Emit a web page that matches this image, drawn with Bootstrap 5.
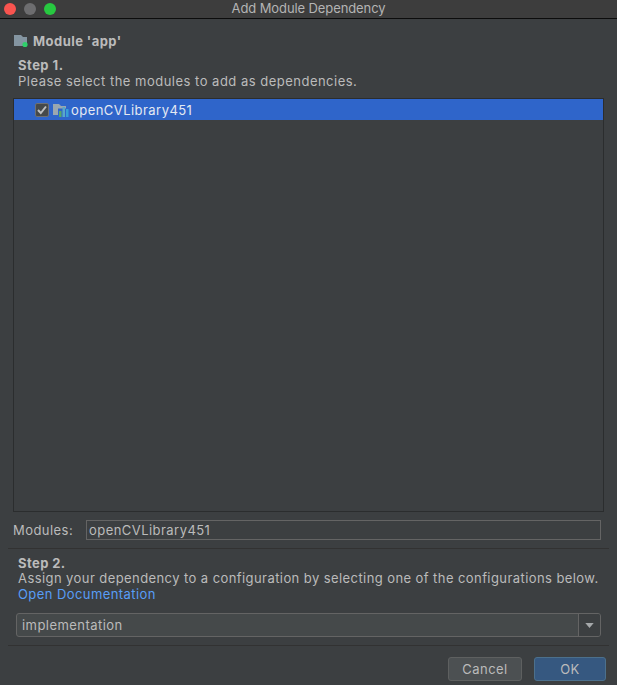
<!DOCTYPE html>
<html lang="en">
<head>
  <meta charset="UTF-8" />
  <title>Add Module Dependency</title>
  <link href="https://cdn.jsdelivr.net/npm/bootstrap@5.3.3/dist/css/bootstrap.min.css" rel="stylesheet"/>
  <style>
    html, body { height: 100%; }
    body {
      margin: 0;
      background: #3c3f41;
      color: #bbbbbb;
      font-family: "Inter", "Liberation Sans", sans-serif;
      font-size: 13px;
      line-height: 16px;
      letter-spacing: .45px;
      overflow: hidden;
    }
    .dialog { width: 617px; height: 685px; }
    .title-bar {
      height: 19px;
      background: #3d3d3d;
      border-bottom: 1px solid #0c0c0c;
      color: #b4b4b4;
      font-size: 13px;
      line-height: 17px;
      letter-spacing: -.1px;
    }
    .lights { left: 4px; top: 0; gap: 8px; padding-top: 3px; }
    .light { width: 12px; height: 12px; border-radius: 50%; }
    .light-red { background: #f9544f; }
    .light-grey { background: #6d6d6f; }
    .light-green { background: #27c840; }
    .module-head { padding: 7px 0 0 14px; height: 37px; font-weight: 700; }
    .step-text { padding: 0 0 0 18px; white-space: nowrap; }
    .step-one { height: 42px; padding-top: 1px; letter-spacing: .49px; }
    .step-text b { font-weight: 700; display: block; }
    .module-list {
      margin: 0 13px;
      height: 414px;
      border: 1px solid #2b2d2e;
    }
    .module-row {
      height: 21px;
      background: #2f65ca;
      color: #e4e9f2;
      padding-left: 21px;
    }
    .check-box {
      width: 14px;
      height: 14px;
      flex: none;
      background: #45494a;
      border: 1px solid #6e7072;
      border-radius: 2px;
    }
    .folder-icon { flex: none; margin-left: 4px; }
    .row-label { margin-left: 2px; }
    .modules-line { margin: 8px 16px 0 13px; height: 20px; }
    .modules-line label { width: 73px; }
    .text-field {
      flex: 1;
      height: 20px;
      border: 1px solid #646464;
      background: #3c3f41;
      color: #bbbbbb;
      padding: 0 2px;
      line-height: 18px;
    }
    .rule { margin: 0 8px; height: 1px; background: #323232; }
    .rule-one { margin-top: 8px; }
    .step-two { padding-top: 6px; height: 64px; letter-spacing: .42px; }
    .step-two b { margin-bottom: -1px; }
    .link-doc { color: #589df6; text-decoration: none; }
    .combo {
      margin: 0 16px;
      height: 24px;
      border: 1px solid #646464;
      border-radius: 3px;
      background: #45494a;
      padding-left: 5px;
    }
    .combo-arrow {
      width: 22px;
      height: 22px;
      background: #3c3f41;
      border-left: 1px solid #646464;
      border-radius: 0 2px 2px 0;
    }
    .tri { width: 9px; height: 5px; fill: #a5a8aa; }
    .rule-two { margin-top: 8px; }
    .foot { padding: 11px 11px 0 0; gap: 12px; }
    .dlg-btn {
      height: 24px;
      border-radius: 3px;
      text-align: center;
      line-height: 22px;
    }
    .btn-cancel { width: 74px; background: #4c5052; border: 1px solid #5e6060; }
    .btn-ok { width: 72px; background: #365880; border: 1px solid #4c708c; color: #bbbbbb; }
  </style>
</head>
<body>
  <div class="dialog d-flex flex-column">
    <div class="title-bar position-relative text-center">
      Add Module Dependency
      <div class="lights position-absolute d-flex">
        <span class="light light-red"></span>
        <span class="light light-grey"></span>
        <span class="light light-green"></span>
      </div>
    </div>

    <div class="module-head d-flex align-items-center gap-1">
      <svg width="15" height="14" viewBox="0 0 15 14">
        <path d="M0 1h7l2 2h4v9H0z" fill="#8495a1"/>
        <circle cx="11" cy="10.5" r="2.6" fill="#2fd06a"/>
      </svg>
      <span>Module 'app'</span>
    </div>

    <div class="step-text step-one">
      <b>Step 1.</b>
      Please select the modules to add as dependencies.
    </div>

    <div class="module-list">
      <div class="module-row d-flex align-items-center">
        <span class="check-box d-flex align-items-center justify-content-center">
          <svg width="10" height="10" viewBox="0 0 10 10"><path d="M1 5l2.8 3L9 1.5" fill="none" stroke="#bdbfc0" stroke-width="2"/></svg>
        </span>
        <svg class="folder-icon" width="16" height="14" viewBox="0 0 16 14">
          <path d="M0 1h6l2 2h5v9H0z" fill="#9aa7b0"/>
          <path d="M5 5.5h10v8.500H5z" fill="#2f65ca"/>
          <path d="M0 3h5v9H0z" fill="#9aa7b0"/>
          <rect x="6" y="8" width="2.500" height="6" fill="#59a869"/>
          <rect x="9.500" y="4" width="2.500" height="10" fill="#59a8c9"/>
          <rect x="13" y="6" width="2.500" height="8" fill="#389fd6"/>
        </svg>
        <span class="row-label">openCVLibrary451</span>
      </div>
    </div>

    <div class="modules-line d-flex align-items-center">
      <label>Modules:</label>
      <div class="text-field">openCVLibrary451</div>
    </div>

    <div class="rule rule-one"></div>

    <div class="step-text step-two">
      <b>Step 2.</b>
      Assign your dependency to a configuration by selecting one of the configurations below.<br>
      <a class="link-doc" href="#">Open Documentation</a>
    </div>

    <div class="combo d-flex align-items-center justify-content-between">
      <span>implementation</span>
      <span class="combo-arrow d-flex align-items-center justify-content-center">
        <svg class="tri" viewBox="0 0 10 6"><path d="M0 0h10L5 6z"/></svg>
      </span>
    </div>

    <div class="rule rule-two"></div>

    <div class="foot d-flex justify-content-end">
      <div class="dlg-btn btn-cancel">Cancel</div>
      <div class="dlg-btn btn-ok">OK</div>
    </div>
  </div>
</body>
</html>
